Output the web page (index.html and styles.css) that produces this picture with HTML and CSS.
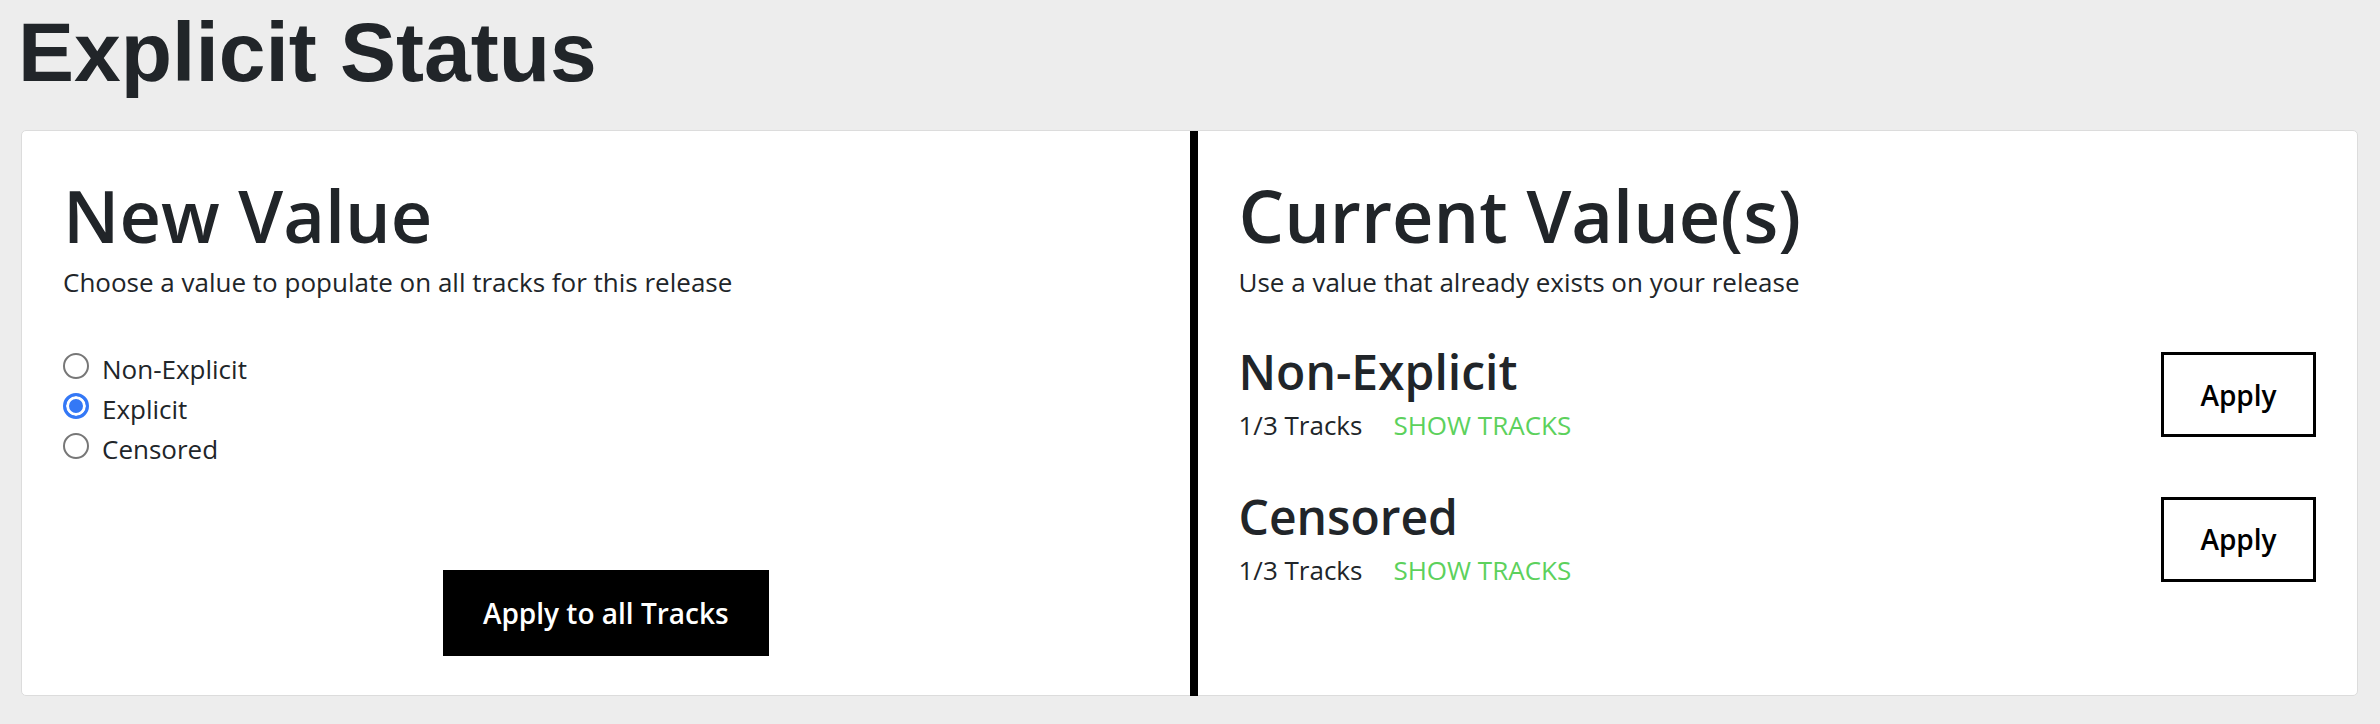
FILE: index.html
```html
<!DOCTYPE html>
<html lang="en">
<head>
<meta charset="utf-8">
<title>Explicit Status</title>
<link rel="stylesheet" href="styles.css">
</head>
<body>
<h1 class="page-title">Explicit Status</h1>
<div class="card">
  <section class="col col-new">
    <h2 class="col-title">New Value</h2>
    <p class="col-sub">Choose a value to populate on all tracks for this release</p>
    <div class="radios">
      <label class="radio-row"><input type="radio" name="explicit" class="radio"><span>Non-Explicit</span></label>
      <label class="radio-row"><input type="radio" name="explicit" class="radio" checked><span>Explicit</span></label>
      <label class="radio-row"><input type="radio" name="explicit" class="radio"><span>Censored</span></label>
    </div>
    <button class="btn-solid" type="button">Apply to all Tracks</button>
  </section>
  <section class="col col-current">
    <h2 class="col-title">Current Value(s)</h2>
    <p class="col-sub">Use a value that already exists on your release</p>
    <div class="items">
      <div class="item">
        <div class="item-info">
          <h3 class="item-title">Non-Explicit</h3>
          <div class="item-meta"><span class="count">1/3 Tracks</span><a class="show" href="#">SHOW TRACKS</a></div>
        </div>
        <button class="btn-outline" type="button">Apply</button>
      </div>
      <div class="item">
        <div class="item-info">
          <h3 class="item-title">Censored</h3>
          <div class="item-meta"><span class="count">1/3 Tracks</span><a class="show" href="#">SHOW TRACKS</a></div>
        </div>
        <button class="btn-outline" type="button">Apply</button>
      </div>
    </div>
  </section>
</div>
</body>
</html>
```
FILE: styles.css
```css
html, body {
  margin: 0;
  padding: 0;
}
body {
  background: #ededed;
  padding: 10px 22px 0 21px;
  font-family: "Open Sans", "Noto Sans", sans-serif;
  color: #212529;
}
.page-title {
  font-family: "Liberation Sans", Arial, sans-serif;
  font-weight: 700;
  font-size: 84px;
  line-height: 1;
  margin: 0 0 36px -3px;
  color: #212529;
}
.card {
  background: #fff;
  border: 1px solid #dcdcdc;
  border-radius: 5px;
  display: grid;
  grid-template-columns: 1fr 1fr;
  height: 566px;
  box-sizing: border-box;
}
.col {
  padding: 41px 41px 41px;
  display: flex;
  flex-direction: column;
}
.col-current {
  border-left: 8px solid #000;
}
.col-title {
  margin: 0;
  font-size: 72px;
  font-weight: 600;
  line-height: 1.2;
}
.col-sub {
  margin: 5px 0 0;
  font-size: 26px;
  line-height: 1.5;
}
.radios {
  margin-top: 47px;
  display: flex;
  flex-direction: column;
}
.radio-row {
  display: flex;
  align-items: center;
  gap: 13px;
  font-size: 26px;
  line-height: 40px;
}
.radio {
  appearance: none;
  -webkit-appearance: none;
  margin: -6px 0 0 0;
  width: 26px;
  height: 26px;
  border-radius: 50%;
  border: 2px solid #777;
  background: #fff;
  box-sizing: border-box;
}
.radio:checked {
  border: 3px solid #3478f6;
  background: #3478f6;
  box-shadow: inset 0 0 0 3px #fff;
}
.btn-solid {
  align-self: center;
  margin-top: 101px;
  height: 86px;
  padding: 0 40px;
  background: #000;
  color: #fff;
  border: 0;
  font-family: "Open Sans", sans-serif;
  font-size: 28px;
  font-weight: 600;
}
.items {
  margin-top: 41px;
  display: flex;
  flex-direction: column;
  gap: 43px;
}
.item {
  display: flex;
  align-items: center;
  justify-content: space-between;
}
.item-title {
  margin: 0;
  font-size: 48px;
  font-weight: 600;
  line-height: 1.2;
}
.item-meta {
  margin-top: 5px;
  font-size: 26px;
  line-height: 1.5;
  display: flex;
  gap: 31px;
}
.show {
  color: #5cd15c;
  text-decoration: none;
}
.btn-outline {
  width: 155px;
  height: 85px;
  background: #fff;
  border: 3px solid #000;
  color: #000;
  font-family: "Open Sans", sans-serif;
  font-size: 28px;
  font-weight: 600;
  margin-top: 1px;
}
```
